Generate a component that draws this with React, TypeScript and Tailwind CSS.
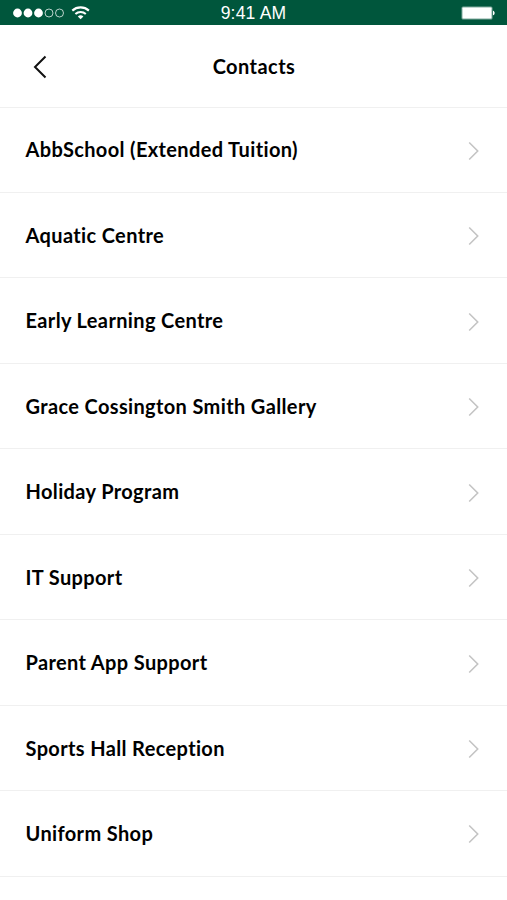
import React from "react";

const contacts = [
  "AbbSchool (Extended Tuition)",
  "Aquatic Centre",
  "Early Learning Centre",
  "Grace Cossington Smith Gallery",
  "Holiday Program",
  "IT Support",
  "Parent App Support",
  "Sports Hall Reception",
  "Uniform Shop",
];

const StatusBar = () => (
  <div className="grid h-[25px] grid-cols-3 items-center bg-[#00563c] text-white">
    <div className="flex items-center gap-[7px] pl-[13px]">
      <svg width="51" height="10" viewBox="0 0 51 10" fill="currentColor">
        <circle cx="4.5" cy="5" r="4.4" />
        <circle cx="15" cy="5" r="4.4" />
        <circle cx="25.5" cy="5" r="4.4" />
        <circle cx="36" cy="5" r="4" fill="none" stroke="currentColor" strokeWidth="0.9" strokeOpacity="0.8" />
        <circle cx="46.5" cy="5" r="4" fill="none" stroke="currentColor" strokeWidth="0.9" strokeOpacity="0.8" />
      </svg>
      <svg width="20" height="14" viewBox="0 0 20 14" fill="none" stroke="currentColor" strokeWidth="2.1">
        <path d="M1.3 4.6a12.4 12.4 0 0 1 16.6 0" />
        <path d="M4.4 8a7.8 7.8 0 0 1 10.4 0" />
        <path d="M9.6 13.2 6.8 10.5a4.1 4.1 0 0 1 5.6 0z" fill="currentColor" stroke="none" />
      </svg>
    </div>
    <div className="pt-px text-center text-[17.5px] leading-[24px] tracking-[0.2px]">9:41 AM</div>
    <div className="flex justify-end pr-[12px]">
      <svg width="34" height="14" viewBox="0 0 34 14" fill="currentColor">
        <rect x="0.5" y="0.5" width="31" height="13" rx="1.5" fillOpacity="0.5" />
        <rect x="1.5" y="1.5" width="29" height="11" rx="0.8" />
        <path d="M32 4.7c2.2.6 2.2 4 0 4.6z" />
      </svg>
    </div>
  </div>
);

const App = () => {
  return (
    <div className="h-[900px] w-full overflow-hidden bg-white font-['Liberation_Sans',sans-serif]">
      <StatusBar />

      <header className="grid h-[82.5px] grid-cols-3 items-center border-b border-[#f0f0f0] px-[26px]">
        <button type="button" aria-label="Back" className="pl-[7px] pt-0.5">
          <svg width="14" height="24" viewBox="0 0 14 24" fill="none" stroke="#111" strokeWidth="2">
            <path d="M12.5 1.5 2 12l10.5 10.5" />
          </svg>
        </button>
        <h1 className="pl-px text-center font-['Lato',sans-serif] text-[20px] font-bold tracking-[0.45px] text-black">
          Contacts
        </h1>
      </header>

      <ul className="font-['Lato',sans-serif] text-[20px] font-bold tracking-[0.36px] text-black">
        {contacts.map((name) => (
          <li
            key={name}
            className="flex h-[85.48px] items-center justify-between border-b border-[#f0f0f0] pl-[25.5px] pr-[28px]"
          >
            <span className="pb-px">{name}</span>
            <svg className="mt-0.5" width="11" height="20" viewBox="0 0 11 20" fill="none" stroke="#c4c4c4" strokeWidth="1.6">
              <path d="m1.2 1.5 8.5 8.5-8.5 8.5" />
            </svg>
          </li>
        ))}
      </ul>
    </div>
  );
};

export default App;
